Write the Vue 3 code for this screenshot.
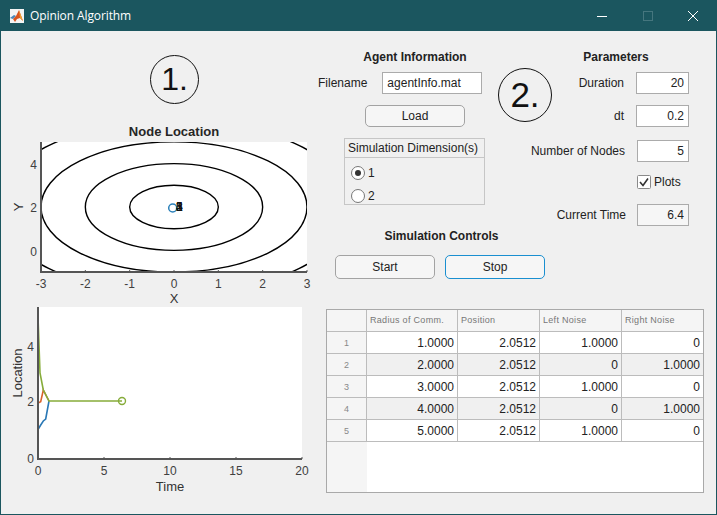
<template>
  <div class="window">
    <header class="titlebar">
      <svg class="app-icon" width="16" height="16" viewBox="0 0 16 16">
        <rect x="1" y="1" width="14" height="14" fill="#f4f4f4" />
        <path d="M1 10 L5 7 L7 8 L4 11 Z" fill="#4a86b8" />
        <path d="M4 11 L7 8 L10 2 L14 13 L11 10 L8 11 L6 14 Z" fill="#d9541e" />
        <path d="M10 2 L14 13 L11 10 Z" fill="#f0a030" />
      </svg>
      <span class="app-title">Opinion Algorithm</span>
      <div class="win-controls">
        <svg width="10" height="10" viewBox="0 0 10 10"><path d="M0 5.5H10" stroke="#fff" /></svg>
        <svg width="10" height="10" viewBox="0 0 10 10"><rect x=".5" y=".5" width="9" height="9" fill="none" stroke="#45767e" /></svg>
        <svg width="10" height="10" viewBox="0 0 10 10"><path d="M0 0L10 10M10 0L0 10" stroke="#fff" /></svg>
      </div>
    </header>

    <main class="content">
      <section class="left">
        <div class="badge badge-one">1.</div>
        <h3 class="plot-title">Node Location</h3>
        <svg class="plot plot-top" width="320" height="168" viewBox="1 138 320 168">
          <defs>
            <clipPath id="axes-top"><rect x="41" y="142" width="266" height="130" /></clipPath>
          </defs>
          <rect x="41" y="142" width="266" height="130" fill="#fff" />
          <g clip-path="url(#axes-top)" fill="none" stroke="#000" stroke-width="1.4">
            <ellipse v-for="r in [1, 2, 3, 4]" :key="r" cx="174" cy="207" :rx="r * 44.33" :ry="r * 21.7" />
          </g>
          <circle cx="172.700" cy="208" r="4" fill="none" stroke="#2a80b9" stroke-width="1.5" />
          <text v-for="n in 5" :key="n" x="176" y="210.700" class="node-label">{{ n }}</text>
          <path d="M41 142V272H307" fill="none" stroke="#555" stroke-width="2" />
          <path v-for="t in topTicks" :key="t.label" :d="`M${t.x} 272v-2`" stroke="#555" />
          <text v-for="t in topTicks" :key="t.label" :x="t.x" y="288" text-anchor="middle" class="tick">{{ t.label }}</text>
          <text v-for="t in topYTicks" :key="t.label" x="37" :y="t.y + 4" text-anchor="end" class="tick">{{ t.label }}</text>
          <text x="174" y="303" text-anchor="middle" class="axis-label">X</text>
          <text transform="translate(23 207) rotate(-90)" text-anchor="middle" class="axis-label">Y</text>
        </svg>
        <svg class="plot" width="320" height="190" viewBox="1 306 320 190">
          <rect x="38" y="307" width="264" height="152" fill="#fff" />
          <polyline points="38,429.5 40.7,425 43.3,421 45.7,419 49,401" fill="none" stroke="#2a78b5" stroke-width="1.6" />
          <polyline points="38,403 40.7,401.7 43.3,390 49,401" fill="none" stroke="#d9622b" stroke-width="1.6" />
          <polyline points="38,316.7 40,373 43.3,390 49,401 122,401" fill="none" stroke="#86ac3a" stroke-width="1.6" />
          <circle cx="122" cy="401" r="3.5" fill="none" stroke="#86ac3a" stroke-width="1.4" />
          <path d="M38 307V459H302" fill="none" stroke="#555" stroke-width="2" />
          <path v-for="t in bottomTicks" :key="t.label" :d="`M${t.x} 459v-2`" stroke="#555" />
          <text v-for="t in bottomTicks" :key="t.label" :x="t.x" y="475" text-anchor="middle" class="tick">{{ t.label }}</text>
          <text v-for="t in bottomYTicks" :key="t.label" x="34" :y="t.y + 4" text-anchor="end" class="tick">{{ t.label }}</text>
          <text x="170" y="491" text-anchor="middle" class="axis-label">Time</text>
          <text transform="translate(22 373) rotate(-90)" text-anchor="middle" class="axis-label">Location</text>
        </svg>
      </section>

      <section class="right">
        <div class="controls">
          <div class="middle">
            <div class="agent">
              <h3 class="group-title">Agent Information</h3>
              <div class="file-row">
                <label>Filename</label>
                <input class="field field-text" value="agentInfo.mat" />
              </div>
              <button class="btn btn-load">Load</button>
              <fieldset class="dims">
                <div class="dims-title">Simulation Dimension(s)</div>
                <label v-for="d in [1, 2]" :key="d" class="radio-row">
                  <span class="radio" :class="{ on: d === 1 }"></span>{{ d }}
                </label>
              </fieldset>
            </div>
            <div class="badge badge-two">2.</div>
            <div class="sim">
              <h3 class="group-title">Simulation Controls</h3>
              <div class="sim-buttons">
                <button class="btn btn-sim">Start</button>
                <button class="btn btn-sim btn-focus">Stop</button>
              </div>
            </div>
          </div>

          <div class="params">
            <h3 class="group-title">Parameters</h3>
            <div class="param-row"><label>Duration</label><input class="field num narrow-gap" value="20" /></div>
            <div class="param-row row-dt"><label>dt</label><input class="field num narrow-gap" value="0.2" /></div>
            <div class="param-row row-nodes"><label>Number of Nodes</label><input class="field num" value="5" /></div>
            <label class="check-row">
              <svg class="check" width="14" height="14" viewBox="0 0 14 14">
                <rect x=".5" y=".5" width="13" height="13" rx="1" fill="#fff" stroke="#8a8a8a" />
                <path d="M3 7L6 10.500L11 3.500" fill="none" stroke="#333" stroke-width="1.6" />
              </svg>
              Plots
            </label>
            <div class="param-row row-time"><label>Current Time</label><input class="field num readonly" value="6.4" readonly /></div>
          </div>
        </div>

        <div class="table-box">
          <table class="grid">
            <colgroup>
              <col class="col-no" />
              <col class="col-first" />
              <col class="col-rest" />
              <col class="col-rest" />
              <col class="col-last" />
            </colgroup>
            <thead>
              <tr>
                <th class="corner"></th>
                <th v-for="h in headers" :key="h">{{ h }}</th>
              </tr>
            </thead>
            <tbody>
              <tr v-for="(row, i) in rows" :key="i">
                <th class="row-no">{{ i + 1 }}</th>
                <td v-for="(cell, j) in row" :key="j">{{ cell }}</td>
              </tr>
            </tbody>
          </table>
        </div>
      </section>
    </main>
  </div>
</template>

<script setup>
const topTicks = [-3, -2, -1, 0, 1, 2, 3].map((v) => ({ label: String(v), x: 174 + v * 44.33 }))
const topYTicks = [{ label: '4', y: 165 }, { label: '2', y: 208 }, { label: '0', y: 251.7 }]
const bottomTicks = [0, 5, 10, 15, 20].map((v) => ({ label: String(v), x: 38 + v * 13.2 }))
const bottomYTicks = [{ label: '4', y: 347 }, { label: '2', y: 402 }, { label: '0', y: 459 }]

const headers = ['Radius of Comm.', 'Position', 'Left Noise', 'Right Noise']
const rows = [
  ['1.0000', '2.0512', '1.0000', '0'],
  ['2.0000', '2.0512', '0', '1.0000'],
  ['3.0000', '2.0512', '1.0000', '0'],
  ['4.0000', '2.0512', '0', '1.0000'],
  ['5.0000', '2.0512', '1.0000', '0'],
]
</script>

<style>
html, body { margin: 0; background: #f0f0f0; }
</style>

<style scoped>
.window {
  width: 717px;
  height: 515px;
  box-sizing: border-box;
  border: 1px solid #1b565f;
  border-top: 0;
  background: #f0f0f0;
  font-family: "Liberation Sans", Arial, sans-serif;
  font-size: 12px;
  color: #222;
  overflow: hidden;
}
.titlebar {
  height: 31px;
  margin: 0 -1px;
  background: #1b565f;
  display: flex;
  align-items: center;
  padding-left: 9px;
  color: #fff;
}
.app-title { margin-left: 5px; font-family: "Open Sans", "Noto Sans", sans-serif; font-size: 12px; letter-spacing: -.1px; }
.win-controls { margin-left: auto; display: flex; gap: 35.500px; padding-right: 19px; }
.win-controls svg { display: block; }

.content { display: flex; }
.left { width: 325px; flex: none; }
.right { flex: 1; min-width: 0; }

.badge {
  box-sizing: border-box;
  border: 1px solid #111;
  border-radius: 50%;
  display: flex;
  align-items: center;
  justify-content: center;
  color: #111;
  font-family: "Liberation Sans", Arial, sans-serif;
}
.badge-one { width: 49px; height: 49px; font-size: 32px; margin: 24px 0 0 149px; }
.plot-title { margin: 21px 0 0; width: 346px; text-align: center; font-size: 13px; line-height: 14px; color: #262626; }
.plot { display: block; }
.plot-top { margin-top: -1px; }
.tick { font-size: 12px; fill: #404040; font-family: "Liberation Sans", Arial, sans-serif; }
.axis-label { font-size: 13px; fill: #333; font-family: "Liberation Sans", Arial, sans-serif; }
.node-label { font-size: 12px; fill: #111; font-family: "Liberation Sans", Arial, sans-serif; }

.controls { display: flex; height: 278px; }
.middle { width: 232px; flex: none; position: relative; margin-left: -8px; }
.group-title { margin: 0; font-size: 12px; line-height: 14px; text-align: center; font-weight: 700; color: #222; }
.agent { width: 168px; padding-top: 19px; }
.agent .group-title { padding-left: 26px; }
.file-row { display: flex; align-items: center; margin-top: 8px; gap: 15px; }
.field {
  box-sizing: border-box;
  height: 22px;
  border: 1px solid #ababab;
  background: #fff;
  padding: 0 4px;
  font: 12px "Liberation Sans", Arial, sans-serif;
  color: #222;
  outline: none;
  border-radius: 0;
}
.field-text { width: 100px; }
.btn {
  box-sizing: border-box;
  display: block;
  width: 100px;
  background: #f6f6f6;
  border: 1px solid #a3a3a3;
  border-radius: 5px;
  font: 12px "Liberation Sans", Arial, sans-serif;
  color: #222;
  padding: 0;
}
.btn-load { height: 22px; margin: 11px 0 0 47px; }
.dims {
  box-sizing: border-box;
  width: 141px;
  height: 67px;
  margin: 11px 0 0 26px;
  padding: 0;
  border: 1px solid #c6c6c6;
}
.dims-title { height: 18px; line-height: 18px; padding-left: 3px; border-bottom: 1px solid #c6c6c6; margin-bottom: 3px; }
.radio-row { display: flex; align-items: center; height: 23px; padding-left: 6px; gap: 3px; }
.radio {
  box-sizing: border-box;
  width: 14px;
  height: 14px;
  border: 1px solid #777;
  border-radius: 50%;
  background: #fff;
  display: flex;
  align-items: center;
  justify-content: center;
}
.radio.on::after { content: ""; width: 6px; height: 6px; border-radius: 50%; background: #333; }
.badge-two { position: absolute; left: 180px; top: 37px; width: 54px; height: 54px; font-size: 35px; }
.sim { margin: 24px 0 0 17px; width: 210px; }
.sim .group-title { padding-left: 3px; }
.sim-buttons { display: flex; gap: 10px; margin-top: 12px; }
.btn-sim { height: 24px; }
.btn-focus { border-color: #1a8fd0; }

.params { width: 159px; flex: none; padding-top: 19px; margin-left: -20px; }
.params .group-title { padding-left: 13px; }
.param-row { display: flex; align-items: center; justify-content: flex-end; height: 22px; margin-top: 8px; }
.param-row label { white-space: nowrap; }
.param-row .field { width: 52px; margin-left: 12px; text-align: right; }
.param-row .narrow-gap { width: 53px; }
.row-dt { margin-top: 11px; }
.row-nodes { margin-top: 13px; }
.num { text-align: right; }
.check-row { display: flex; align-items: center; gap: 3px; height: 14px; margin: 13px 0 0 107px; }
.row-time { margin-top: 15px; }
.row-time .field { margin-left: 11px; }
.readonly { background: #f6f6f6; }

.table-box {
  box-sizing: border-box;
  width: 378px;
  height: 184px;
  border: 1px solid #a9a9a9;
  background: linear-gradient(to right, #f5f5f5 40px, #fff 40px);
}
.grid { border-collapse: separate; border-spacing: 0; table-layout: fixed; width: 376px; }
.col-no { width: 40px; }
.col-first { width: 91px; }
.col-rest { width: 82px; }
.col-last { width: 81px; }
.grid th, .grid td {
  box-sizing: border-box;
  height: 22px;
  border-right: 1px solid #bcbcbc;
  border-bottom: 1px solid #bcbcbc;
  padding: 0;
}
.grid tr > :last-child { border-right: 0; }
.grid thead th {
  background: #f5f5f5;
  font-weight: 400;
  font-size: 9px;
  letter-spacing: .3px;
  color: #777;
  text-align: left;
  padding: 0 0 1px 3px;
}
.grid .row-no { background: #f5f5f5; font-weight: 400; font-size: 9px; color: #888; text-align: center; }
.grid td { text-align: right; padding-right: 3px; background: #fff; color: #222; }
.grid tbody tr:nth-child(even) td { background: #f0f0f0; }
</style>
